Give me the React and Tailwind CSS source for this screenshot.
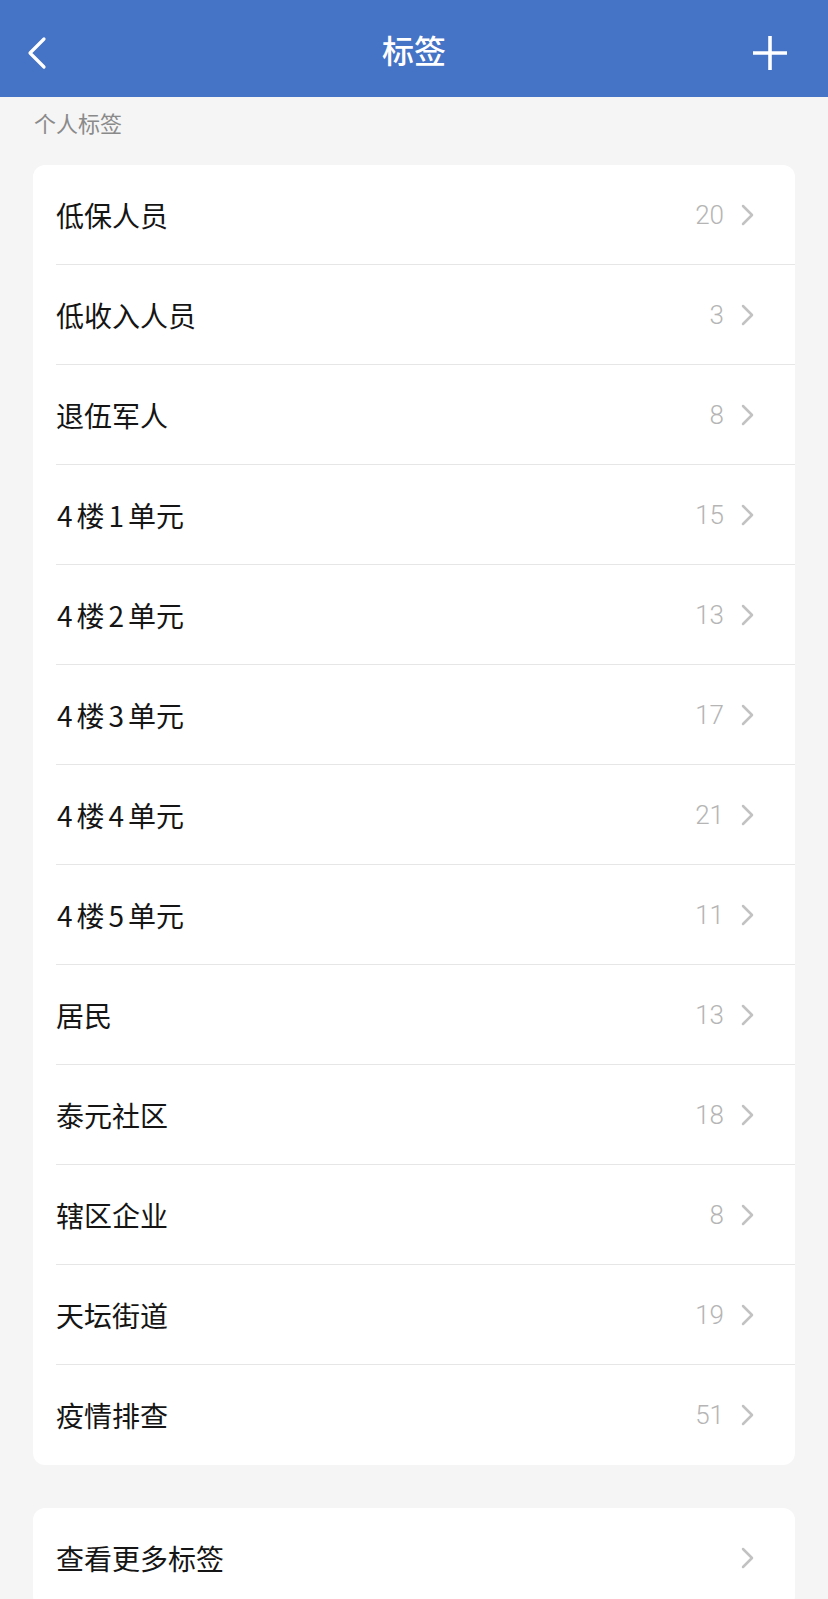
import React from "react";

const items = [
  ["低保人员", "20"],
  ["低收入人员", "3"],
  ["退伍军人", "8"],
  ["4楼1单元", "15"],
  ["4楼2单元", "13"],
  ["4楼3单元", "17"],
  ["4楼4单元", "21"],
  ["4楼5单元", "11"],
  ["居民", "13"],
  ["泰元社区", "18"],
  ["辖区企业", "8"],
  ["天坛街道", "19"],
  ["疫情排查", "51"],
];

const Chevron = () => (
  <svg width="15" height="24" viewBox="0 0 15 24" fill="none">
    <polyline points="3,3 12,12 3,21" stroke="#c2c2c2" strokeWidth="2.5" strokeLinecap="round" strokeLinejoin="round" />
  </svg>
);

function Label({ text }) {
  return (
    <span className="flex-1 text-[28px] text-[#151515] leading-none">
      {text.split(/(\d)/).map((p, i) =>
        /\d/.test(p) ? (
          <span key={i} className={i === 1 ? "pl-[1px] pr-[4px]" : "px-[4px]"}>{p}</span>
        ) : (
          <React.Fragment key={i}>{p}</React.Fragment>
        )
      )}
    </span>
  );
}

function Row({ label, count, last }) {
  return (
    <div className="h-[100px] pl-[23px] flex">
      <div className={`flex-1 flex items-center pr-[40px] ${last ? "" : "border-b border-[#e6e6e6]"}`}>
        <Label text={label} />
        {count && (
          <span className="text-[26px] font-light text-[#b5b5b5] mr-[16px] leading-none" style={{ fontFamily: "Roboto, sans-serif" }}>
            {count}
          </span>
        )}
        <Chevron />
      </div>
    </div>
  );
}

export default function App() {
  return (
    <div
      className="w-[828px] h-[1599px] overflow-hidden bg-[#f5f5f5]"
      style={{ fontFamily: '"Noto Sans CJK SC", "Noto Sans", sans-serif' }}
    >
      <div className="h-[97px] bg-[#4573c5] flex items-center justify-between pt-[8px] pl-[26px] pr-[40px] relative">
        <svg width="22" height="34" viewBox="0 0 22 34" fill="none">
          <polyline points="18,3 4,17 18,31" stroke="white" strokeWidth="3.2" strokeLinecap="round" strokeLinejoin="round" />
        </svg>
        <span className="absolute left-0 right-0 text-center text-white text-[32px] font-medium top-[33px] leading-none">标签</span>
        <svg width="36" height="36" viewBox="0 0 36 36" fill="none">
          <line x1="18" y1="1" x2="18" y2="35" stroke="white" strokeWidth="3.6" />
          <line x1="1" y1="18" x2="35" y2="18" stroke="white" strokeWidth="3.6" />
        </svg>
      </div>
      <div className="h-[68px] pl-[34px] pt-[10px]">
        <span className="text-[22px] leading-[30px] text-[#8a8a8a]">个人标签</span>
      </div>
      <div className="mx-[33px] bg-white rounded-[12px] overflow-hidden">
        {items.map(([l, c], i) => (
          <Row key={i} label={l} count={c} last={i === items.length - 1} />
        ))}
      </div>
      <div className="mx-[33px] mt-[43px] bg-white rounded-[12px] overflow-hidden">
        <Row label="查看更多标签" last />
      </div>
    </div>
  );
}
